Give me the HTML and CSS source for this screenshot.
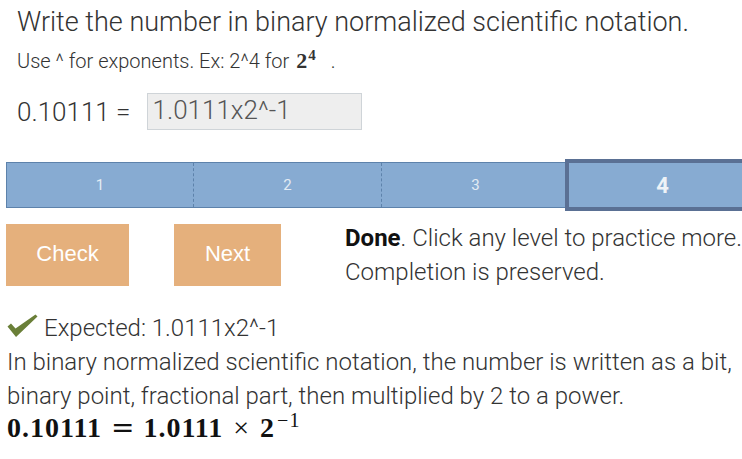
FILE: index.html
```html
<!DOCTYPE html>
<html>
<head>
<meta charset="utf-8">
<link rel="stylesheet" href="styles.css">
</head>
<body>
<div class="page">
  <div class="prompt">
    <h1 class="title">Write the number in binary normalized scientific notation.</h1>
    <p class="hint">Use ^ for exponents. Ex: 2^4 for <span class="math-inline">2<sup>4</sup></span>.</p>
    <div class="answer-row">
      <span class="question">0.10111 =</span>
      <div class="answer-box">1.0111x2^-1</div>
    </div>
  </div>

  <div class="levels">
    <div class="level">1</div>
    <div class="level">2</div>
    <div class="level">3</div>
    <div class="level level-current">4</div>
  </div>

  <div class="actions">
    <button class="btn btn-check">Check</button>
    <button class="btn btn-next">Next</button>
    <div class="status"><b>Done</b>. Click any level to practice more. Completion is preserved.</div>
  </div>

  <div class="feedback">
    <div class="expected">
      <svg class="checkmark" width="32" height="24" viewBox="0 0 32 24">
        <path d="M0.5 12.5 L4 9.5 L8.5 14.5 L28.5 0.5 L30.5 2.5 L9 23 Z" fill="#6a7f38"/>
      </svg>
      <span>Expected: 1.0111x2^-1</span>
    </div>
    <p class="explanation">In binary normalized scientific notation, the number is written as a bit, binary point, fractional part, then multiplied by 2 to a power.</p>
    <div class="math-block">0.10111<span class="op">=</span>1.0111<span class="times">×</span>2<sup>−1</sup></div>
  </div>
</div>
</body>
</html>
```

FILE: styles.css
```css
html, body {
  margin: 0;
  padding: 0;
  overflow-x: hidden;
  background: #ffffff;
}

body {
  font-family: Roboto, "Liberation Sans", sans-serif;
  font-weight: 300;
  color: #333333;
}

.page {
  width: 760px;
}

.prompt {
  padding-left: 17px;
  padding-top: 5px;
}

.title {
  margin: 0;
  font-size: 27px;
  font-weight: 300;
  line-height: 34px;
}

.hint {
  margin: 10px 0 0 0;
  font-size: 20px;
  line-height: 24px;
}

.math-inline {
  font-family: "Liberation Serif", serif;
  font-weight: 700;
  font-size: 22px;
  margin-left: 2px;
}

.math-inline sup {
  font-size: 15px;
  font-weight: 700;
  vertical-align: 8px;
  line-height: 0;
  margin-left: 1px;
  margin-right: 15px;
}

.answer-row {
  display: flex;
  align-items: center;
  margin-top: 20px;
  height: 37px;
}

.question {
  font-size: 26px;
  margin-right: 17px;
}

.answer-box {
  box-sizing: border-box;
  width: 215px;
  height: 37px;
  background: #eeeeee;
  border: 1px solid #cfd4d8;
  font-size: 26px;
  color: #555555;
  padding-left: 4px;
  line-height: 33px;
}

.levels {
  display: flex;
  margin-top: 32px;
  margin-left: 6px;
  width: 754px;
  height: 46px;
  box-sizing: border-box;
  border: 1px solid #5d82ab;
  background: #87abd2;
}

.level {
  width: 187px;
  flex: none;
  display: flex;
  align-items: center;
  justify-content: center;
  font-family: Roboto, sans-serif;
  font-weight: 400;
  font-size: 15px;
  color: #e3ebf4;
  border-left: 1px dashed #5d82ab;
}

.level:first-child {
  border-left: none;
  width: 186px;
}

.level-current {
  border-left: none;
  outline: 4px solid #5a7094;
  font-weight: 700;
  font-size: 22px;
  color: #eef2f7;
}

.actions {
  display: flex;
  align-items: flex-start;
  margin-top: 16px;
  margin-left: 6px;
}

.btn {
  height: 62px;
  border: none;
  background: #e5b07c;
  color: #ffffff;
  font-family: "Liberation Sans", Arial, sans-serif;
  font-size: 22px;
  padding: 0 0 2px 0;
}

.btn-check {
  width: 123px;
}

.btn-next {
  width: 107px;
  margin-left: 45px;
}

.status {
  margin-left: 64px;
  margin-top: -3px;
  width: 400px;
  font-size: 24px;
  line-height: 34px;
}

.status b {
  font-weight: 700;
  color: #111111;
}

.feedback {
  margin-left: 7px;
  margin-top: 22px;
}

.expected {
  display: flex;
  align-items: center;
  font-size: 24px;
  line-height: 34px;
}

.checkmark {
  margin-right: 5px;
  margin-top: -5px;
}

.explanation {
  margin: 0;
  width: 735px;
  font-size: 24px;
  line-height: 34px;
}

.math-block {
  font-family: "Liberation Serif", serif;
  font-weight: 700;
  font-size: 28px;
  letter-spacing: 1px;
  line-height: 30px;
  color: #111111;
}

.math-block .op {
  font-family: "DejaVu Serif", serif;
  font-weight: 400;
  letter-spacing: 0;
  margin: 0 9px 0 9px;
}

.math-block .times {
  font-weight: 400;
  letter-spacing: 0;
  margin: 0 11px 0 10px;
}

.math-block sup {
  font-size: 20px;
  vertical-align: 10px;
  line-height: 0;
  font-weight: 400;
  margin-left: 2px;
}
```
